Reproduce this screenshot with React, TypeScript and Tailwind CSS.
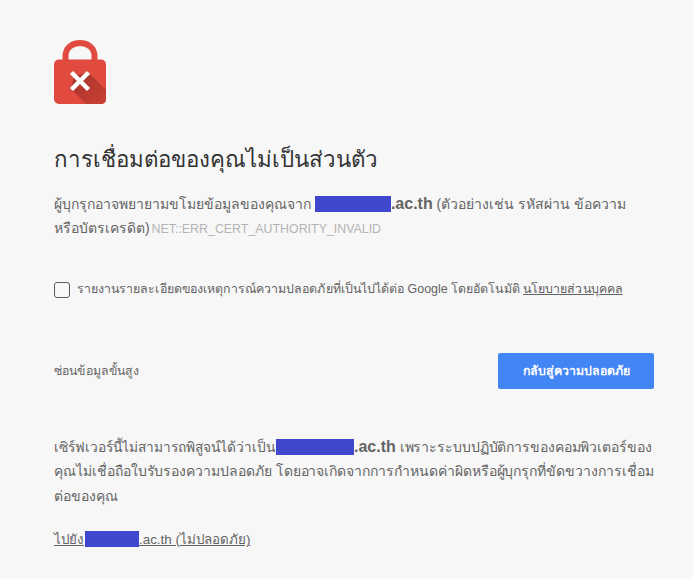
import React from "react";

function LockIcon() {
  return (
    <svg width="52" height="64" viewBox="0 0 52 64" className="block">
      <defs>
        <linearGradient id="lockShadow" x1="0.15" y1="0.15" x2="0.9" y2="0.9">
          <stop offset="0" stopColor="#a9352b" />
          <stop offset="1" stopColor="#c83f35" />
        </linearGradient>
      </defs>
      <path d="M11.500 22 V16 C11.500 8 18 3 26 3 C34 3 40.500 8 40.500 16 V22" fill="none" stroke="#e04a3f" strokeWidth="6" />
      <rect x="0" y="19.500" width="52" height="44.500" rx="5" fill="#e04a3f" />
      <path d="M20 36 L35 33 L52 50 V59 C52 62 50 64 47 64 H32 L17 49 Z" fill="url(#lockShadow)" />
      <path d="M17.500 32.500 L34.500 49.500 M34.500 32.500 L17.500 49.500" fill="none" stroke="#ffffff" strokeWidth="4.500" />
    </svg>
  );
}

function Redact({ w }: { w: string }) {
  return <span className={`inline-block h-4 align-[-3px] bg-[#3f48cc] ${w}`} />;
}

export default function App() {
  return (
    <div className="min-h-[579px] w-[693px] overflow-hidden bg-[#f7f7f7] pl-[54px] pr-[39px] pt-[40px] text-[14px] text-[#646464] font-['Liberation_Sans','Noto_Sans','DejaVu_Sans',sans-serif]">
      <LockIcon />
      <h1 className="mt-[38px] h-[36px] whitespace-nowrap text-[22.3px] font-normal leading-[36px] text-[#333333]">
        การเชื่อมต่อของคุณไม่เป็นส่วนตัว
      </h1>
      <p className="mt-[13px] whitespace-nowrap leading-[25px]">
        <span className="block h-[25px]">
          ผู้บุกรุกอาจพยายามขโมยข้อมูลของคุณจาก <Redact w="w-[76px]" />
          <strong className="text-[16px] font-bold">.ac.th</strong> (ตัวอย่างเช่น รหัสผ่าน ข้อความ
        </span>
        <span className="block h-[25px]">
          หรือบัตรเครดิต) <span className="-ml-0.5 text-[12.4px] text-[#b4b4b4]">NET::ERR_CERT_AUTHORITY_INVALID</span>
        </span>
      </p>
      <label className="mt-[36px] flex h-[25px] items-center whitespace-nowrap text-[12.4px] tracking-[0.045px]">
        <span className="h-4 w-4 rounded-[3px] border border-[#5a5a5a] bg-[#f7f7f7]" />
        <span className="ml-[7px]">
          รายงานรายละเอียดของเหตุการณ์ความปลอดภัยที่เป็นไปได้ต่อ Google โดยอัตโนมัติ{" "}
          <span className="underline">นโยบายส่วนบุคคล</span>
        </span>
      </label>
      <div className="mt-[51px] flex h-9 items-center justify-between text-[12.3px]">
        <span className="tracking-[0.15px]">ซ่อนข้อมูลขั้นสูง</span>
        <button className="h-9 w-[156px] rounded-[2px] bg-[#4285f4] text-[12.3px] font-bold text-white">
          กลับสู่ความปลอดภัย
        </button>
      </div>
      <p className="mt-[45px] whitespace-nowrap leading-[25px]">
        <span className="block h-[25px]">
          <span className="mr-px text-[13.75px]">เซิร์ฟเวอร์นี้ไม่สามารถพิสูจน์ได้ว่าเป็น</span>
          <Redact w="w-[78px]" />
          <strong className="text-[16px] font-bold">.ac.th</strong>{" "}
          <span className="tracking-[-0.1px]">เพราะระบบปฏิบัติการของคอมพิวเตอร์ของ</span>
        </span>
        <span className="block h-[25px] tracking-[-0.045px]">
          คุณไม่เชื่อถือใบรับรองความปลอดภัย โดยอาจเกิดจากการกำหนดค่าผิดหรือผู้บุกรุกที่ขัดขวางการเชื่อม
        </span>
        <span className="block h-[25px]">ต่อของคุณ</span>
      </p>
      <p className="mt-[18px] text-[13.4px] leading-[25px]">
        <span className="underline">
          ไปยัง<span className="ml-px"><Redact w="w-[54px]" /></span>.ac.th (ไม่ปลอดภัย)
        </span>
      </p>
    </div>
  );
}
